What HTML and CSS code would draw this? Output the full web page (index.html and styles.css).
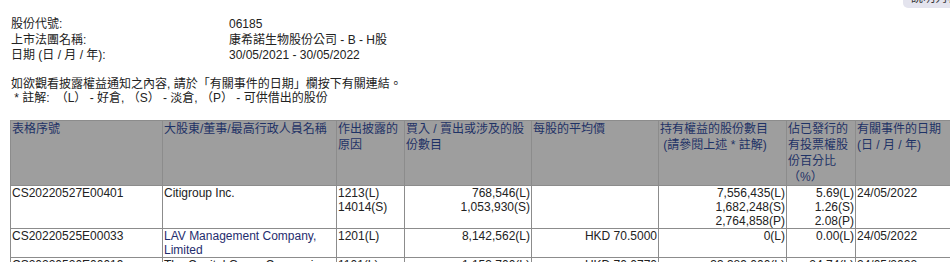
FILE: index.html
```html
<!DOCTYPE html>
<html>
<head>
  <title>權益披露</title>
  <link rel="stylesheet" href="styles.css">
</head>
<body>
  <div class="help-tab">說明列表</div>

  <div class="page">
    <div class="info">
      <div class="info-row"><span class="info-label">股份代號:</span><span>06185</span></div>
      <div class="info-row"><span class="info-label">上市法團名稱:</span><span>康希諾生物股份公司 - B - H股</span></div>
      <div class="info-row"><span class="info-label">日期 (日 / 月 / 年):</span><span>30/05/2021 - 30/05/2022</span></div>
    </div>

    <div class="note">
      <div>如欲觀看披露權益通知之內容, 請於「有關事件的日期」欄按下有關連結。</div>
      <div>&nbsp;* 註解:　（L） - 好倉, （S） - 淡倉, （P） - 可供借出的股份</div>
    </div>

    <table class="di-table">
      <colgroup>
        <col class="c-form">
        <col class="c-name">
        <col class="c-reason">
        <col class="c-shares">
        <col class="c-price">
        <col class="c-held">
        <col class="c-pct">
        <col class="c-date">
        <col class="c-assoc">
      </colgroup>
      <thead>
        <tr>
          <th>表格序號</th>
          <th>大股東/董事/最高行政人員名稱</th>
          <th>作出披露的原因</th>
          <th>買入 / 賣出或涉及的股份數目</th>
          <th>每股的平均價</th>
          <th>持有權益的股份數目<br>&nbsp;(請參閱上述 * 註解)</th>
          <th>佔已發行的有投票權股份百分比<br>（%）</th>
          <th>有關事件的日期<br>(日 / 月 / 年)</th>
          <th>相關法團<br>權益</th>
        </tr>
      </thead>
      <tbody>
        <tr>
          <td>CS20220527E00401</td>
          <td>Citigroup Inc.</td>
          <td>1213(L)<br>14014(S)</td>
          <td class="num">768,546(L)<br>1,053,930(S)</td>
          <td class="num"></td>
          <td class="num">7,556,435(L)<br>1,682,248(S)<br>2,764,858(P)</td>
          <td class="num">5.69(L)<br>1.26(S)<br>2.08(P)</td>
          <td>24/05/2022</td>
          <td></td>
        </tr>
        <tr>
          <td>CS20220525E00033</td>
          <td class="link">LAV Management Company, Limited</td>
          <td>1201(L)</td>
          <td class="num">8,142,562(L)</td>
          <td class="num">HKD 70.5000</td>
          <td class="num">0(L)</td>
          <td class="num">0.00(L)</td>
          <td>24/05/2022</td>
          <td></td>
        </tr>
        <tr>
          <td>CS20220520E00019</td>
          <td>The Capital Group Companies, Inc.</td>
          <td>1101(L)</td>
          <td class="num">1,153,700(L)</td>
          <td class="num">HKD 70.0770</td>
          <td class="num">33,389,000(L)</td>
          <td class="num">24.74(L)</td>
          <td>24/05/2022</td>
          <td></td>
        </tr>
      </tbody>
    </table>
  </div>
</body>
</html>
```

FILE: styles.css
```css
* {
  margin: 0;
  padding: 0;
  box-sizing: border-box;
}

body {
  font-family: 'Liberation Sans', 'Noto Sans CJK TC', sans-serif;
  font-size: 12px;
  color: #222;
  background-color: #fff;
  overflow: hidden;
  position: relative;
}

.page {
  padding: 17px 0 0 10px;
}

/* Stock info block */
.info {
  line-height: 15.5px;
}

.info-row {
  display: flex;
}

.info-label {
  width: 219px;
  padding-left: 1px;
}

.note {
  margin-top: 13px;
  line-height: 14px;
  padding-left: 1px;
}

/* Top-right tab, cut off by the window */
.help-tab {
  position: absolute;
  top: -9px;
  right: -20px;
  width: 67px;
  height: 17px;
  padding-left: 8px;
  background-color: #e4e4ee;
  border-radius: 5px;
  line-height: 14px;
  color: #333;
}

/* Disclosure table */
.di-table {
  margin-top: 15px;
  border-collapse: collapse;
  table-layout: fixed;
  width: 1000px;
}

.c-form { width: 152px; }
.c-name { width: 174px; }
.c-reason { width: 68px; }
.c-shares { width: 127px; }
.c-price { width: 127px; }
.c-held { width: 128px; }
.c-pct { width: 69px; }
.c-date { width: 95px; }
.c-assoc { width: 60px; }

.di-table th,
.di-table td {
  border: 1px solid #8c8c8c;
  vertical-align: top;
  text-align: left;
  padding: 0 1px;
}

.di-table th {
  background-color: #9e9e9e;
  color: #1e3266;
  font-weight: normal;
  line-height: 16px;
  height: 65px;
}

.di-table td {
  line-height: 14px;
  color: #222;
}

.di-table td.num {
  text-align: right;
}

.di-table td.link {
  color: #1f2d6e;
}
```
